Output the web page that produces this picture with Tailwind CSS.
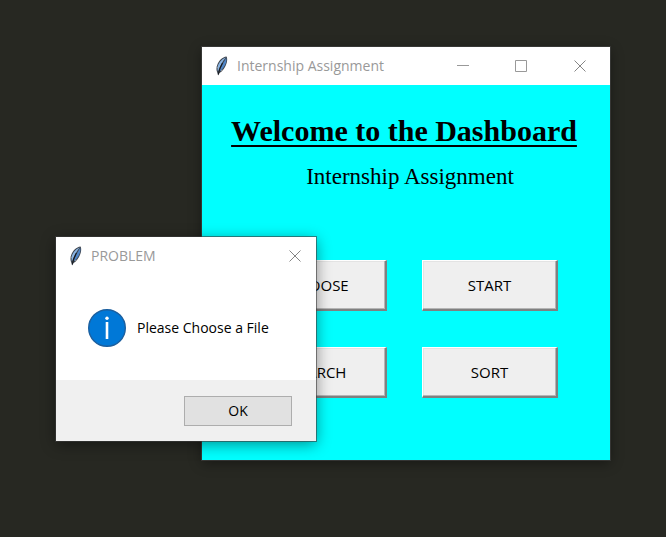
<!DOCTYPE html>
<html lang="en">
<head>
<meta charset="utf-8">
<meta name="viewport" content="width=device-width, initial-scale=1">
<title>Internship Assignment</title>
<script src="https://cdn.jsdelivr.net/npm/@tailwindcss/browser@4"></script>
</head>
<body class="relative min-h-screen overflow-hidden bg-[#272822] font-['Open_Sans',sans-serif] text-black">
<svg class="hidden" aria-hidden="true">
  <symbol id="feather" viewBox="0 0 14 20">
    <path d="M11.500 0.500C7.500 1 3.600 4.800 2.200 9C1.200 12 1.200 14 2.200 16.500L3.200 19.500L4.500 17C7.500 15.500 10.500 11.500 11.800 6.500C12.400 4 12.300 1.500 11.500 0.500Z" fill="#3f4650"/>
    <path d="M10.800 1.500C7.500 2.500 4 6 2.900 10C2.400 12 2.400 13.500 3 15.500C4.500 11 7.500 5 10.800 1.500Z" fill="#8ab4e2"/>
    <path d="M11.200 2C9 5.500 6 10.500 4.500 15.500C7.500 13.500 10 10 11 6.500C11.400 5 11.500 3.200 11.200 2Z" fill="#4f86c8"/>
    <path d="M7.500 7C6 9.500 4.200 13 3.300 18.500" fill="none" stroke="#15181d" stroke-width="1.100"/>
    <path d="M1.500 10.500L2.800 11.500M6 15L7.500 14" stroke="#b5b5b5" stroke-width="0.800"/>
  </symbol>
  <symbol id="close" viewBox="0 0 12 12">
    <path d="M0.500 0.500L11.500 11.500M11.500 0.500L0.500 11.500" fill="none" stroke="#858585" stroke-width="1"/>
  </symbol>
</svg>

<main class="absolute left-[202px] top-[47px] w-[408px] bg-[cyan] pb-[62px] shadow-[0_0_0_1px_rgba(70,70,70,0.6),0_3px_12px_rgba(0,0,0,0.4)]">
  <header class="flex h-[38px] items-center bg-white pl-[13px]">
    <svg class="h-5 w-3.5" aria-hidden="true"><use href="#feather"/></svg>
    <span class="ml-2 flex-1 pb-0.5 text-[14px] text-[#999]">Internship Assignment</span>
    <button class="flex h-full w-[58px] items-center justify-center" aria-label="Minimize"><svg class="size-3" viewBox="0 0 12 12"><path d="M0 5.500H12" stroke="#999"/></svg></button>
    <button class="flex h-full w-[58px] items-center justify-center" aria-label="Maximize"><svg class="size-3" viewBox="0 0 12 12"><path d="M0.500 0.500H11.500V11.500H0.500Z" fill="none" stroke="#999"/></svg></button>
    <button class="flex h-full w-[60px] items-center justify-center" aria-label="Close"><svg class="size-3"><use href="#close"/></svg></button>
  </header>
  <h1 class="mt-7 pr-1 text-center font-['Liberation_Serif',serif] text-[30px] leading-9 font-bold underline decoration-2 underline-offset-4">Welcome to the Dashboard</h1>
  <p class="mt-3 pl-2 text-center font-['Liberation_Serif',serif] text-[23px] leading-8">Internship Assignment</p>
  <div class="mt-[67px] grid grid-cols-2 gap-x-[35px] gap-y-9 pr-[52px] pl-[49px] text-[15px]">
    <button class="h-[51px] border-t border-r-2 border-b-2 border-l border-t-white border-r-[#808080] border-b-[#808080] border-l-white bg-[#efefef] shadow-[inset_-1px_-1px_0_#b5b5b5,inset_1px_1px_0_#e3e3e3]">CHOOSE</button>
    <button class="h-[51px] border-t border-r-2 border-b-2 border-l border-t-white border-r-[#808080] border-b-[#808080] border-l-white bg-[#efefef] shadow-[inset_-1px_-1px_0_#b5b5b5,inset_1px_1px_0_#e3e3e3]">START</button>
    <button class="h-[51px] border-t border-r-2 border-b-2 border-l border-t-white border-r-[#808080] border-b-[#808080] border-l-white bg-[#efefef] shadow-[inset_-1px_-1px_0_#b5b5b5,inset_1px_1px_0_#e3e3e3]">SEARCH</button>
    <button class="h-[51px] border-t border-r-2 border-b-2 border-l border-t-white border-r-[#808080] border-b-[#808080] border-l-white bg-[#efefef] shadow-[inset_-1px_-1px_0_#b5b5b5,inset_1px_1px_0_#e3e3e3]">SORT</button>
  </div>
</main>

<section role="dialog" aria-labelledby="dialog-title" class="absolute left-14 top-[237px] w-[260px] bg-white shadow-[0_0_0_1px_rgba(60,60,60,0.6),0_3px_14px_rgba(0,0,0,0.45)]">
  <header class="flex h-[38px] items-center pl-[13px]">
    <svg class="h-5 w-3.5" aria-hidden="true"><use href="#feather"/></svg>
    <h2 id="dialog-title" class="ml-2 flex-1 pb-0.5 text-[14px] text-[#999]">PROBLEM</h2>
    <button class="flex h-full w-[42px] items-center justify-center" aria-label="Close"><svg class="size-3"><use href="#close"/></svg></button>
  </header>
  <div class="flex h-[105px] items-center pl-8">
    <svg class="size-[38px]" viewBox="0 0 38 38" aria-hidden="true">
      <circle cx="19" cy="19" r="18.300" fill="#0078d7" stroke="#1b5f9f" stroke-width="1.400"/>
      <path d="M19 13V30" stroke="#fff" stroke-width="2.600"/><circle cx="19" cy="9.300" r="1.700" fill="#fff"/>
    </svg>
    <p class="ml-[11px] text-[14px]">Please Choose a File</p>
  </div>
  <footer class="flex justify-end bg-[#f0f0f0] pt-4 pr-6 pb-[15px]">
    <button class="h-[30px] w-[108px] border border-[#adadad] bg-[#e1e1e1] pb-0.5 text-[14px]">OK</button>
  </footer>
</section>
</body>
</html>
